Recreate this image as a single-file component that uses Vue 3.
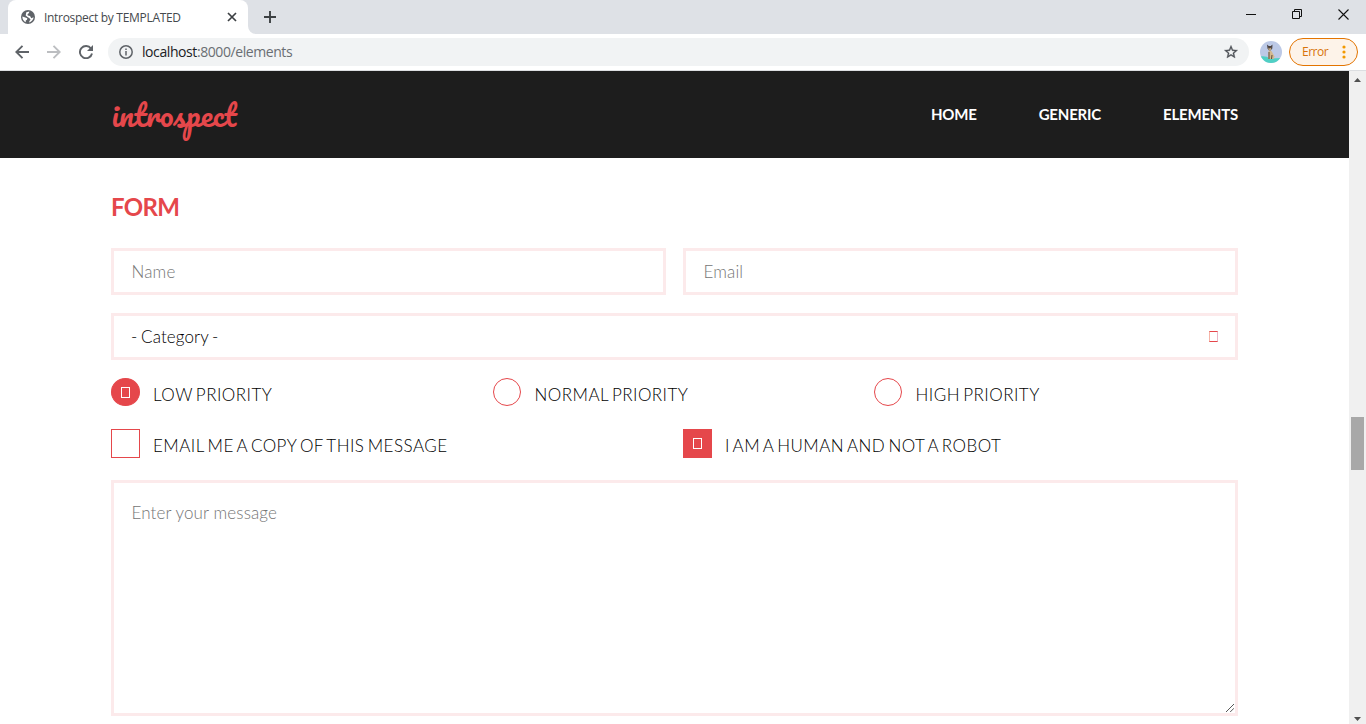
<script setup>
const nav = ['Home', 'Generic', 'Elements']
const priorities = [
  { label: 'Low Priority', on: true },
  { label: 'Normal Priority', on: false },
  { label: 'High Priority', on: false },
]
const checks = [
  { label: 'Email me a copy of this message', on: false },
  { label: 'I am a human and not a robot', on: true },
]
</script>

<template>
  <div class="window">
    <div class="tabs">
      <div class="tab">
        <svg class="globe" width="14" height="14" viewBox="0 0 14 14">
          <circle cx="7" cy="7" r="7" fill="#5f6368" />
          <path d="M1.4 6.6 4.3 7.5 6.3 8.2 6 9.7 4.8 10.5 4.7 12.2C2.5 11.300 1.200 9 1.400 6.600ZM5.300 2.200 8.300 1.500 8 3 6.500 4.200 6.800 5.500 9 6 10.300 8.200 12.600 7.300C12.400 9.800 10.500 12 8 12.600L8.600 10.700 9.600 9.800 8.500 8.200 6.500 7 4.700 5.600Z" fill="#fff" />
        </svg>
        <span class="tab-title">Introspect by TEMPLATED</span>
        <svg class="tab-close" width="10" height="10" viewBox="0 0 10 10"><path d="M1 1 9 9M9 1 1 9" stroke="#3c4043" stroke-width="1.7" /></svg>
        <svg class="tab-curve" width="8" height="8" viewBox="0 0 8 8"><path d="M0 0A8 8 0 0 0 8 8H0Z" fill="#fff" /></svg>
      </div>
      <svg class="plus" width="12" height="12" viewBox="0 0 12 12"><path d="M6 0V12M0 6H12" stroke="#3c4043" stroke-width="1.9" /></svg>
      <div class="controls">
        <svg width="10" height="12" viewBox="0 0 10 12"><path d="M0 5.500H10" stroke="#111" /></svg>
        <svg width="10" height="10" viewBox="0 0 10 10"><path d="M.5 2.500H7.500V9.500H.5ZM2.500 2.500V.5H9.500V7.500H7.500" fill="none" stroke="#111" /></svg>
        <svg width="11" height="11" viewBox="0 0 11 11"><path d="M.5.5 10.500 10.500M10.500.5.5 10.500" stroke="#111" stroke-width="1.1" /></svg>
      </div>
    </div>

    <div class="toolbar">
      <svg class="nav-icon" width="14" height="14" viewBox="0 0 14 14"><path d="M14 7H1.500M7.500 .8 1.300 7 7.500 13.200" fill="none" stroke="#5f6368" stroke-width="1.900" /></svg>
      <svg class="nav-icon" width="14" height="14" viewBox="0 0 14 14"><path d="M0 7H12.500M6.500 .8 12.700 7 6.500 13.200" fill="none" stroke="#bcbec1" stroke-width="1.900" /></svg>
      <svg class="nav-icon" width="14" height="14" viewBox="0 0 14 14"><path d="M12 3.600A6.100 6.100 0 1 0 13 8.500" fill="none" stroke="#5f6368" stroke-width="1.900" /><path d="M14 0V6H8Z" fill="#5f6368" /></svg>
      <div class="omnibox">
        <svg width="14" height="14" viewBox="0 0 14 14"><circle cx="7" cy="7" r="6.200" fill="none" stroke="#5f6368" stroke-width="1.500" /><path d="M7 6V10.500M7 3.400V5" stroke="#5f6368" stroke-width="1.500" /></svg>
        <span class="url"><b>localhost</b>:8000/elements</span>
        <svg class="star" width="16" height="16" viewBox="0 0 24 24"><path d="M22 9.240l-7.190-.62L12 2 9.190 8.630 2 9.240l5.460 4.730L5.820 21 12 17.270 18.180 21l-1.630-7.030L22 9.240zM12 15.400l-3.760 2.270 1-4.280-3.320-2.880 4.380-.38L12 6.100l1.710 4.040 4.380.38-3.320 2.880 1 4.280L12 15.400z" fill="#4b4f54" stroke="#4b4f54" stroke-width=".5" /></svg>
      </div>
      <svg class="avatar" width="22" height="22" viewBox="0 0 22 22">
        <defs><clipPath id="disc"><circle cx="11" cy="11" r="11" /></clipPath></defs>
        <g clip-path="url(#disc)">
          <rect width="22" height="22" fill="#bcc9e6" />
          <path d="M0 15.500Q6 14.500 10 17.500L22 17V22H0Z" fill="#4fd0c4" />
          <path d="M8.500 10H11.500L14.500 15.500 13.500 18H8.300Z" fill="#d3b98f" />
          <path d="M7 3.500 8.800 5H10.800L12.500 3.500 12.300 7.500 10.500 9.500H9L7.500 7.500Z" fill="#4a4242" />
          <path d="M8.300 6.500 9.500 7.500 11.300 6.500 11 9 9.800 10 8.600 9Z" fill="#c0a47c" />
          <path d="M9 11V18M12 14 11.500 18" stroke="#5c4b3b" stroke-width="1" />
        </g>
      </svg>
      <div class="error"><span>Error</span><svg width="4" height="14" viewBox="0 0 4 14" fill="#f29900"><circle cx="2" cy="2" r="1.600" /><circle cx="2" cy="7" r="1.600" /><circle cx="2" cy="12" r="1.600" /></svg></div>
    </div>

    <div class="viewport">
      <div class="page">
        <header>
          <svg class="logo" width="130" height="60" viewBox="0 0 130 60"><text x=".5" y="42" textLength="125" lengthAdjust="spacingAndGlyphs">introspect</text></svg>
          <nav><a v-for="n in nav" :key="n">{{ n }}</a></nav>
        </header>
        <main>
          <h3>Form</h3>
          <div class="two">
            <div class="field hint">Name</div>
            <div class="field hint">Email</div>
          </div>
          <div class="field select"><span>- Category -</span><i class="missing"></i></div>
          <div class="three">
            <div v-for="p in priorities" :key="p.label" class="choice">
              <span class="box round" :class="{ on: p.on }"><i v-if="p.on" class="missing"></i></span><span class="label">{{ p.label }}</span>
            </div>
          </div>
          <div class="two checks">
            <div v-for="c in checks" :key="c.label" class="choice">
              <span class="box" :class="{ on: c.on }"><i v-if="c.on" class="missing"></i></span><span class="label">{{ c.label }}</span>
            </div>
          </div>
          <div class="area hint">Enter your message
            <svg class="grip" width="8" height="8" viewBox="0 0 8 8"><path d="M0 8 8 0M4.200 8 8 4.200" stroke="#444" stroke-width=".9" /></svg>
          </div>
        </main>
      </div>
      <div class="scrollbar">
        <svg width="7" height="4" viewBox="0 0 7 4"><path d="M0 4 3.500 0 7 4Z" fill="#505050" /></svg>
        <div class="thumb"></div>
        <svg class="down" width="7" height="4" viewBox="0 0 7 4"><path d="M0 0H7L3.500 4Z" fill="#505050" /></svg>
      </div>
    </div>
  </div>
</template>

<style>
html, body { overflow: hidden; background: #fff; }
</style>

<style scoped>
* { box-sizing: border-box; }
svg { display: block; flex: none; }
.window { width: 1366px; height: 724px; overflow: hidden; display: flex; flex-direction: column; font-family: "Lato", sans-serif; }
.tabs { height: 34px; flex: none; background: #dee1e6; display: flex; padding-left: 8px; }
.tab { position: relative; width: 240px; background: #fff; border-radius: 8px 8px 0 0; display: flex; align-items: center; padding: 0 11px 0 13px; }
.tab-title { font: 12px "Open Sans", sans-serif; letter-spacing: -.3px; color: #45494d; margin-left: 9px; flex: 1; white-space: nowrap; }
.tab-curve { position: absolute; right: -8px; bottom: 0; }
.plus { margin: 11px 0 0 16px; }
.controls { margin-left: auto; display: flex; gap: 36px; padding: 9px 17px 0 0; }
.toolbar { height: 37px; flex: none; display: flex; align-items: center; padding: 0 8px 1px 15px; border-bottom: 1px solid #dcdee1; }
.nav-icon { margin-right: 18px; }
.omnibox { width: 1141px; height: 28px; margin-left: -3px; border-radius: 14px; background: #f1f3f4; display: flex; align-items: center; padding: 0 10px 0 11px; }
.url { margin-left: 9px; font: 14px "Open Sans", sans-serif; color: #6a6e73; letter-spacing: -.42px; }
.url b { font-weight: 400; color: #202124; }
.star { margin-left: auto; }
.avatar { margin: 0 7px 0 11px; }
.error { width: 69px; height: 28px; border: 1px solid #e37400; border-radius: 14px; background: #fdf3e9; color: #d8730a; display: flex; align-items: center; justify-content: space-between; padding: 0 11px 0 12px; font: 12px "Open Sans", sans-serif; letter-spacing: -.5px; }
.viewport { flex: 1; display: flex; min-height: 0; }
.page { width: 1349px; background: #fff; }
header { height: 87px; background: #1d1d1d; display: flex; align-items: center; padding: 0 111px; justify-content: space-between; }
.logo { overflow: visible; }
.logo text { font: 400 30px "Pacifico", "Lato", cursive; fill: #e5474b; }
nav { display: flex; gap: 62px; padding-bottom: 2px; }
nav a { font-size: 15px; font-weight: 700; letter-spacing: -.2px; color: #fff; text-transform: uppercase; line-height: 20px; }
main { padding: 0 111px; color: #000; font-size: 17px; font-weight: 300; }
h3 { margin: 0; height: 90px; padding-top: 34px; line-height: 30px; font-size: 24px; font-weight: 700; letter-spacing: -.7px; color: #e5474b; text-transform: uppercase; }
.two { display: grid; grid-template-columns: 555px 555px; gap: 17px; }
.field { height: 47px; border: 3px solid #fceaeb; padding: 0 17.5px; line-height: 42px; background: #fff; }
.hint { color: #757575; }
.field.hint { letter-spacing: .15px; }
.select { margin-top: 18px; display: flex; justify-content: space-between; align-items: center; padding: 0 17px 0 17px; letter-spacing: .1px; word-spacing: -1px; }
.missing { display: block; width: 9px; height: 11px; border: 1px solid currentColor; }
.select .missing { color: #e5474b; border-left-color: #f6b5a8; border-right-color: #e9b7c8; }
.three { display: grid; grid-template-columns: 382px 381px 1fr; margin-top: 18px; height: 51px; }
.choice { display: flex; }
.box { width: 29px; height: 29px; border: 1px solid #e5474b; color: #fff; display: flex; align-items: center; justify-content: center; flex: none; }
.round { width: 28px; height: 28px; border-radius: 50%; }
.round.on { width: 29px; }
.on { background: #e5474b; }
.label { margin-left: 13px; padding-top: 2px; line-height: 30px; text-transform: uppercase; white-space: nowrap; letter-spacing: .47px; word-spacing: -1.8px; }
.three .choice:not(:first-child) .label { margin-left: 13.500px; }
.checks { height: 51px; }
.area { position: relative; height: 236px; border: 3px solid #fceaeb; padding: 15px 17.500px; line-height: 30px; letter-spacing: .12px; }
.grip { position: absolute; right: 1px; bottom: 1px; }
.scrollbar { width: 17px; background: #f0f0f0; display: flex; flex-direction: column; align-items: center; padding: 7px 0 3px; }
.thumb { width: 13px; height: 53px; background: #a8a8a8; margin-top: 335px; }
.down { margin-top: auto; }
</style>
